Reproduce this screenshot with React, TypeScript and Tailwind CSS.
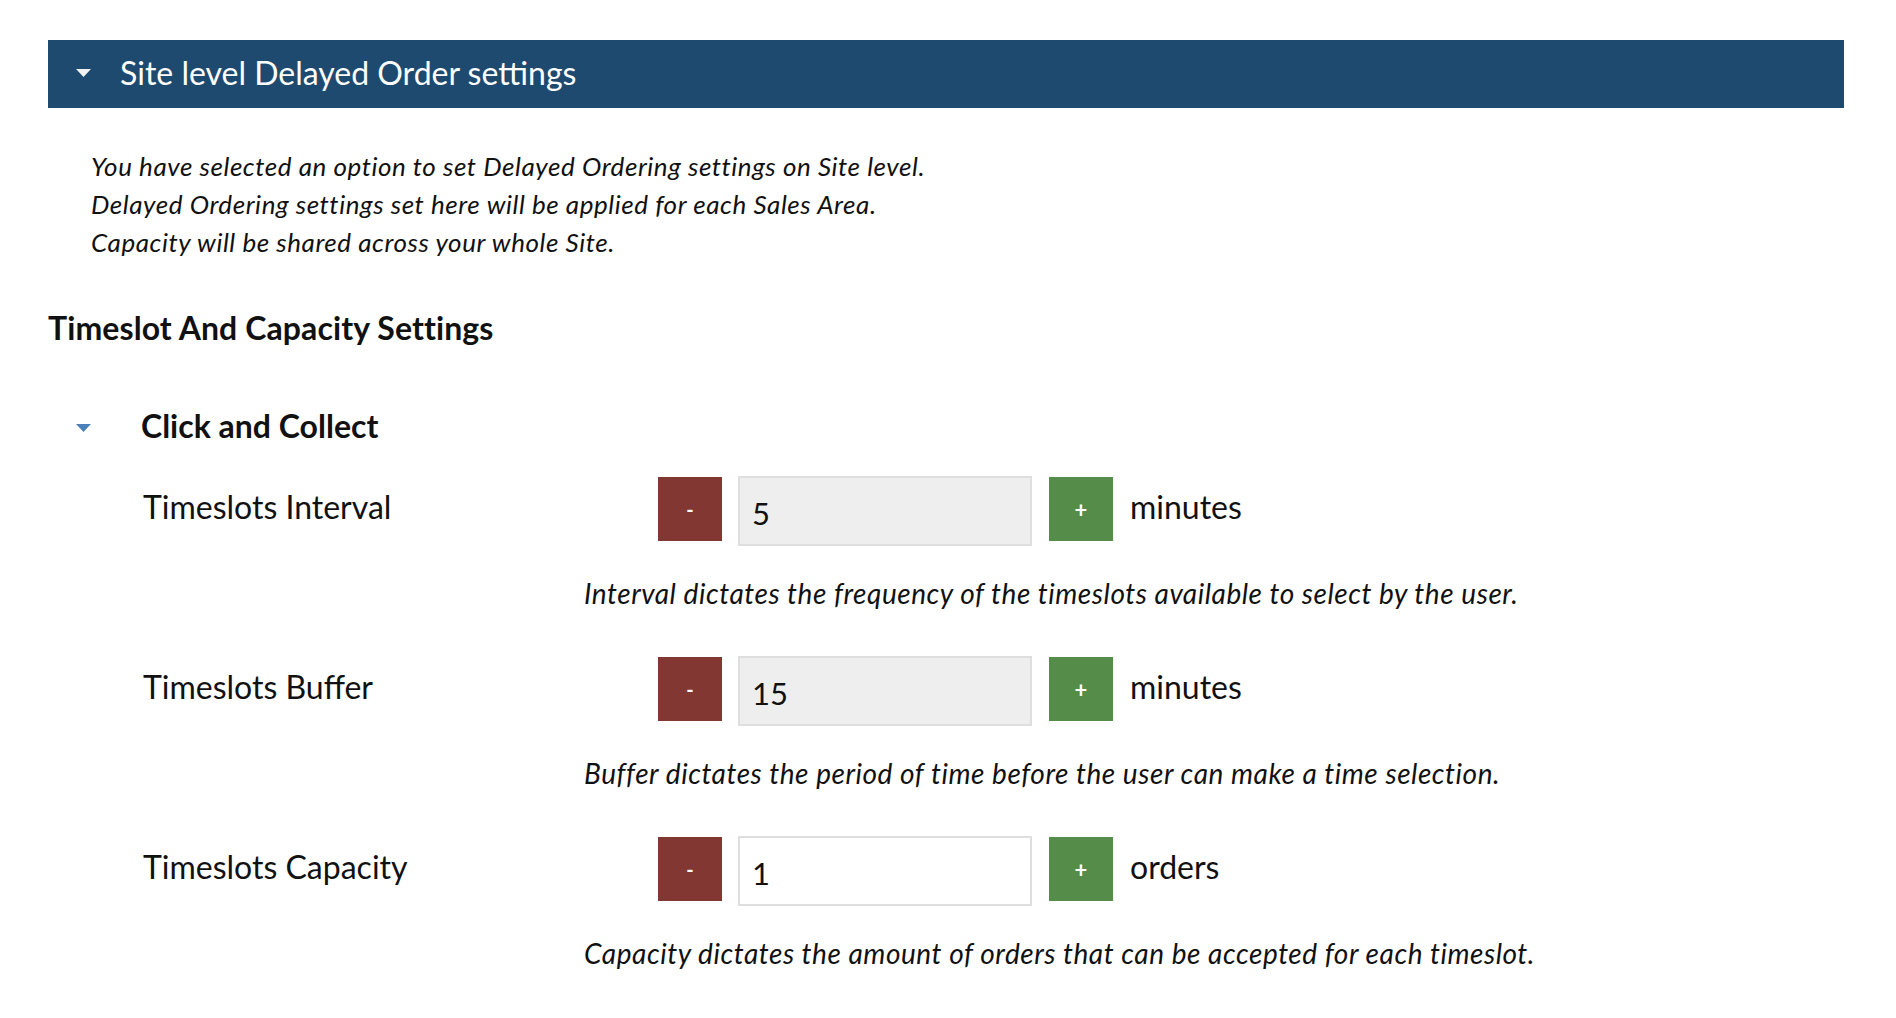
import React from "react";

const Tri = ({ color }: { color: string }) => (
  <svg width="15" height="8" viewBox="0 0 15 8" className="block">
    <polygon points="0,0 15,0 7.5,8" fill={color} />
  </svg>
);

type RowProps = { label: string; value: string; unit: string; help: string; filled: boolean; first?: boolean };

const Row = ({ label, value, unit, help, filled, first }: RowProps) => (
  <div className={first ? "mt-[31px]" : "mt-[44px]"}>
    <div className="flex items-start">
      <div className="w-[610px] pl-[95px] h-[64px] flex items-center text-[32px] text-[#111] -mt-[1px]">{label}</div>
      <button className="mt-[1px] w-[64px] h-[64px] bg-[#833733] text-white text-[20px] font-bold flex items-center justify-center">-</button>
      <div
        className={
          "ml-[16px] w-[294px] h-[70px] border-2 border-[#dedede] flex items-center pl-[12px] pt-[4px] text-[31px] text-[#111] " +
          (filled ? "bg-[#eeeeee]" : "bg-white")
        }
      >
        {value}
      </div>
      <button className="mt-[1px] ml-[17px] w-[64px] h-[64px] bg-[#568c4a] text-white text-[22px] font-bold flex items-center justify-center">+</button>
      <div className="ml-[17px] h-[64px] flex items-center text-[32px] text-[#111] -mt-[1px]">{unit}</div>
    </div>
    <div className="mt-[28px] ml-[536px] text-[28px] leading-[38px] italic tracking-[0.55px] text-[#111]">{help}</div>
  </div>
);

export default function App() {
  return (
    <div className="min-h-screen bg-white pt-[40px] pl-[48px] pr-[52px]" style={{ fontFamily: "Lato, 'Open Sans', sans-serif" }}>
      <div className="h-[68px] bg-[#1e4a6f] flex items-center">
        <div className="ml-[28px] -mt-[3px]">
          <Tri color="#f2f2f2" />
        </div>
        <div className="ml-[29px] text-[32px] text-white -mt-[2px]">Site level Delayed Order settings</div>
      </div>
      <div className="mt-[39px] ml-[43px] text-[26px] leading-[38px] italic tracking-[0.55px] text-[#111]">
        <div>You have selected an option to set Delayed Ordering settings on Site level.</div>
        <div>Delayed Ordering settings set here will be applied for each Sales Area.</div>
        <div>Capacity will be shared across your whole Site.</div>
      </div>
      <div className="mt-[48px] text-[32px] leading-[38px] font-bold tracking-[0.1px] text-[#111]">Timeslot And Capacity Settings</div>
      <div className="mt-[60px] flex items-center h-[38px]">
        <div className="ml-[28px] mt-[3px]">
          <Tri color="#4b80b9" />
        </div>
        <div className="ml-[50px] text-[32px] leading-[38px] font-bold text-[#111]">Click and Collect</div>
      </div>
      <Row
        first
        label="Timeslots Interval"
        value="5"
        unit="minutes"
        filled
        help="Interval dictates the frequency of the timeslots available to select by the user."
      />
      <Row
        label="Timeslots Buffer"
        value="15"
        unit="minutes"
        filled
        help="Buffer dictates the period of time before the user can make a time selection."
      />
      <Row
        label="Timeslots Capacity"
        value="1"
        unit="orders"
        filled={false}
        help="Capacity dictates the amount of orders that can be accepted for each timeslot."
      />
    </div>
  );
}
